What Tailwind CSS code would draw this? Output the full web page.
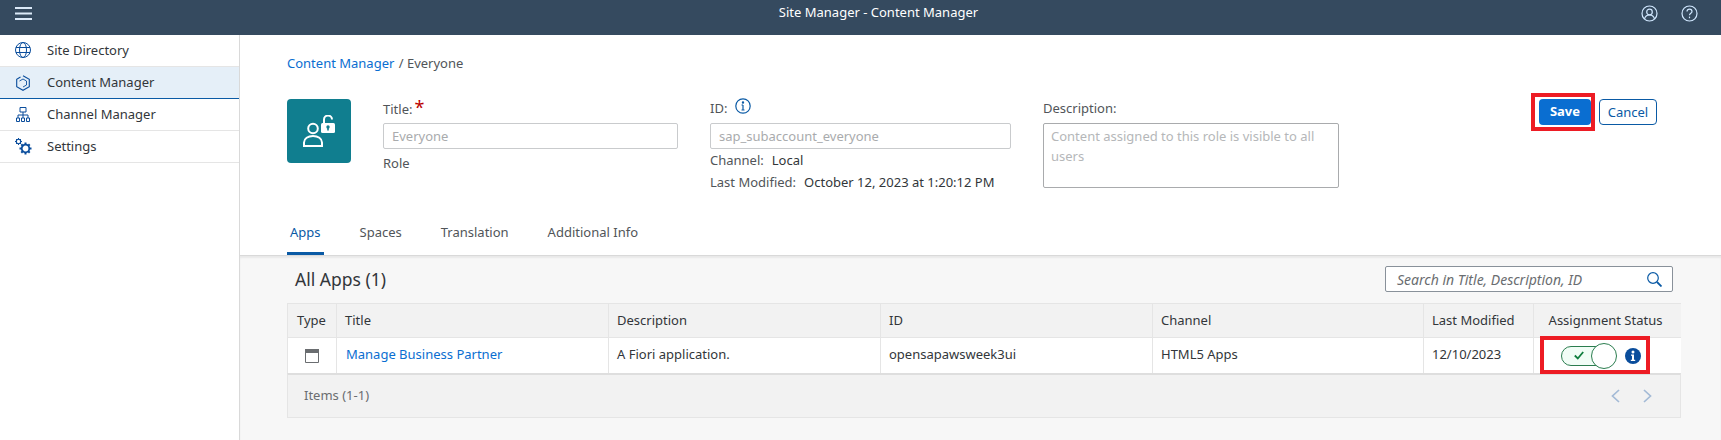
<!DOCTYPE html>
<html lang="en">

<head>
    <meta charset="UTF-8">
    <meta name="viewport" content="width=device-width, initial-scale=1.0">
    <title>Site Manager - Content Manager</title>
    <script src="https://cdn.jsdelivr.net/npm/@tailwindcss/browser@4"></script>
</head>

<body class="font-['Noto_Sans',sans-serif] text-[13px] text-[#32363a] bg-white overflow-hidden">
    <div class="w-[1721px] h-[440px] flex flex-col">

        <!-- top bar -->
        <header class="h-[35px] shrink-0 bg-[#354a5f] flex items-center relative text-white">
            <svg class="absolute left-[15px] top-[7px] w-[17px] h-[13px]" viewBox="0 0 17 13" stroke="#dbe9f8" stroke-width="2" fill="none">
                <path d="M0 1H17M0 6.5H17M0 12H17" />
            </svg>
            <div class="w-full text-center pl-[36px] text-[13px] -mt-[9px]">Site Manager - Content Manager</div>
            <svg class="absolute left-[1641px] top-[5px] w-[17px] h-[17px]" viewBox="0 0 17 17" stroke="#d1e8ff" stroke-width="1.2" fill="none">
                <circle cx="8.5" cy="8.5" r="7.5" />
                <circle cx="8.5" cy="7" r="2.8" />
                <path d="M3.5 14c.6-2.6 2.5-4 5-4s4.400 1.400 5 4" />
            </svg>
            <svg class="absolute left-[1681px] top-[5px] w-[17px] h-[17px]" viewBox="0 0 17 17" stroke="#d1e8ff" stroke-width="1.2" fill="none">
                <circle cx="8.5" cy="8.500" r="7.500" />
                <path d="M6 6.600c0-1.500 1.100-2.500 2.500-2.500s2.500 1 2.500 2.300c0 1.800-2.500 1.900-2.500 3.800" />
                <path d="M8.500 11.600v1.600" />
            </svg>
        </header>

        <div class="flex flex-1 min-h-0">
            <!-- side nav -->
            <nav class="w-[240px] shrink-0 border-r border-[#d9d9d9] bg-white">
                <div class="h-[32px] flex items-center border-b border-[#e5e5e5] pl-[47px] relative">
                    <svg class="absolute left-[15px] top-[7px] w-[16px] h-[16px]" viewBox="0 0 16 16" fill="none" stroke="#0a4d9c" stroke-width="1">
                        <circle cx="8" cy="8" r="7.500" />
                        <ellipse cx="8" cy="8" rx="3.500" ry="7.500" />
                        <path d="M1 5.500H15M1 10.500H15" />
                    </svg>
                    Site Directory
                </div>
                <div class="h-[32px] flex items-center border-b border-[#0a5aa5] bg-[#e5eff8] pl-[47px] relative">
                    <svg class="absolute left-[16px] top-[8px] w-[14px] h-[16px]" viewBox="0 0 14 16" fill="none" stroke="#0a4d9c" stroke-width="1.100">
                        <path d="M7 .700L13.300 4.300V11.700L7 15.300L.700 11.700V4.300L4.500 2.100" />
                        <path d="M3.500 6L7 4L10.500 6V10L7 12" stroke-width=".9" />
                    </svg>
                    Content Manager
                </div>
                <div class="h-[32px] flex items-center border-b border-[#e5e5e5] pl-[47px] relative">
                    <svg class="absolute left-[16px] top-[8px] w-[14px] h-[15px]" viewBox="0 0 14 15" fill="none" stroke="#0a4d9c" stroke-width="1">
                        <path d="M4 .500H10V5H4ZM7 5V8M2 11V8H12V11M7 8V11M.500 11H3.500V14.500H.500ZM5.500 11H8.500V14.500H5.500ZM10.500 11H13.500V14.500H10.500Z" />
                    </svg>
                    Channel Manager
                </div>
                <div class="h-[32px] flex items-center border-b border-[#e5e5e5] pl-[47px] relative">
                    <svg class="absolute left-[15px] top-[7px] w-[17px] h-[17px]" viewBox="0 0 17 17" fill="none" stroke="#0a4d9c">
                        <circle cx="3.500" cy="3.500" r="2.200" stroke-width="1.100" />
                        <path d="M3.500 0V1.300M3.500 5.700V7M0 3.500H1.300M5.700 3.500H7M1 1L2 2M5 5L6 6M6 1L5 2M1 6L2 5" stroke-width="1" />
                        <circle cx="10.500" cy="10.500" r="3.800" stroke-width="1.800" />
                        <path d="M10.500 4.500V6.500M10.500 14.500V16.500M4.500 10.500H6.500M14.500 10.500H16.500M6.300 6.300L7.700 7.700M13.300 13.300L14.700 14.700M14.700 6.300L13.300 7.700M7.700 13.300L6.300 14.700" stroke-width="2" />
                    </svg>
                    Settings
                </div>
            </nav>

            <main class="flex-1 min-w-0 flex flex-col">
                <!-- object header -->
                <section class="h-[220px] shrink-0 pl-[47px] pt-[20px] relative">
                    <div class="h-[16px] leading-[16px]">
                        <span class="text-[#0a6ed1]">Content Manager</span><span class="text-[#515559] ml-[1px]"> / Everyone</span>
                    </div>

                    <div class="flex mt-[28px] h-[90px]">
                        <div class="w-[64px] h-[64px] rounded-[4px] bg-[#107e8f] flex items-center justify-center shrink-0">
                            <svg class="w-[32px] h-[32px]" viewBox="0 0 32 32" fill="none" stroke="#fff" stroke-width="2">
                                <circle cx="10" cy="13.500" r="4.800" />
                                <path d="M1 31V27.500C1 23.500 5 21 10 21S19 23.500 19 27.500V31Z" />
                                <path d="M21 9V4.500A4 4 0 0 1 29 4.500" />
                                <rect x="18" y="8" width="14" height="10" rx="1.500" fill="#fff" stroke="none" />
                                <circle cx="25" cy="12" r="1.700" fill="#107e8f" stroke="none" />
                                <rect x="24.200" y="12" width="1.600" height="3.500" fill="#107e8f" stroke="none" />
                            </svg>
                        </div>

                        <div class="ml-[32px] w-[295px] shrink-0">
                            <div class="h-[24px] leading-[19px] text-[#515559]">Title:<span class="text-[#bb0000] text-[18px] leading-[16px] ml-[2px]">*</span></div>
                            <div class="h-[26px] border border-[#c9cbcd] rounded-[2px] px-[8px] leading-[25px] text-[#a9abad]">Everyone</div>
                            <div class="mt-[4px] text-[#515559] leading-[20px]">Role</div>
                        </div>

                        <div class="ml-[32px] w-[301px] shrink-0">
                            <div class="h-[24px] leading-[19px] text-[#515559] flex items-start">ID:
                                <svg class="ml-[8px] -mt-[1px] w-[16px] h-[16px]" viewBox="0 0 16 16" fill="none" stroke="#0a5aa5" stroke-width="1.200">
                                    <circle cx="8" cy="8" r="7.200" />
                                    <path d="M8 7V12M6.500 12H9.500M6.500 7H8" />
                                    <circle cx="8" cy="4.500" r=".6" fill="#0a5aa5" />
                                </svg>
                            </div>
                            <div class="h-[26px] border border-[#c9cbcd] rounded-[2px] px-[8px] leading-[25px] text-[#a9abad]">sap_subaccount_everyone</div>
                            <div class="leading-[20px] mt-[1px]"><span class="text-[#515559]">Channel:</span><span class="ml-[8px]">Local</span></div>
                            <div class="leading-[20px] mt-[2px]"><span class="text-[#515559]">Last Modified:</span><span class="ml-[8px]">October 12, 2023 at 1:20:12 PM</span></div>
                        </div>

                        <div class="ml-[32px] w-[296px] shrink-0">
                            <div class="h-[24px] leading-[19px] text-[#515559]">Description:</div>
                            <div class="h-[65px] border border-[#a9abad] rounded-[2px] px-[7px] py-[2px] leading-[20px] text-[#b5b7b9]">Content assigned to this role is visible to all users</div>
                        </div>

                        <div class="ml-[200px] flex gap-[8px] items-start h-[26px]">
                            <div class="w-[52px] h-[26px] rounded-[4px] bg-[#0a6ed1] text-white font-bold text-center leading-[25px] relative">
                                Save
                                <span class="absolute -left-[8px] -top-[6px] w-[64px] h-[38px] border-[4px] border-[#ed1c24]"></span>
                            </div>
                            <div class="w-[58px] h-[26px] rounded-[4px] border border-[#0a5aa5] text-[#0a5aa5] text-center leading-[24px]">Cancel</div>
                        </div>
                    </div>

                    <!-- tabs -->
                    <div class="flex mt-[32px] gap-[39px] pl-[3px] h-[34px] leading-[22px]">
                        <div class="text-[#0a5aa5] relative">Apps<span class="absolute -left-[3px] -right-[3px] top-[31px] h-[3px] bg-[#0a5aa5]"></span></div>
                        <div class="text-[#515559]">Spaces</div>
                        <div class="text-[#515559]">Translation</div>
                        <div class="text-[#515559]">Additional Info</div>
                    </div>
                </section>

                <!-- apps table -->
                <section class="flex-1 bg-[#f7f7f7] border-t border-[#d9d9d9] shadow-[inset_0_2px_2px_rgba(0,0,0,0.06)] pl-[47px] pr-[40px]">
                    <div class="h-[47px] flex items-center justify-between pr-[8px]">
                        <div class="pl-[8px] text-[17.500px] text-[#32363a] -mt-[1px]">All Apps (1)</div>
                        <div class="w-[288px] h-[26px] bg-white border border-[#89919a] rounded-[2px] flex items-center justify-between px-[11px] italic text-[14px] text-[#6a6d70] -mt-[1px]">
                            Search in Title, Description, ID
                            <svg class="w-[15px] h-[15px] mr-[-1px]" viewBox="0 0 15 15" fill="none" stroke="#0a5aa5" stroke-width="1.200">
                                <circle cx="6" cy="6" r="5.300" />
                                <path d="M10 10L14.500 14.500" stroke-width="1.800" />
                            </svg>
                        </div>
                    </div>

                    <div class="border border-[#e5e5e5] border-b-0 grid grid-cols-[49px_272px_272px_272px_271px_110px_147px] text-[#32363a]">
                        <div class="h-[34px] bg-[#f2f2f2] border-r border-b border-[#e5e5e5] pl-[9px] leading-[33px]">Type</div>
                        <div class="h-[34px] bg-[#f2f2f2] border-r border-b border-[#e5e5e5] pl-[8px] leading-[33px]">Title</div>
                        <div class="h-[34px] bg-[#f2f2f2] border-r border-b border-[#e5e5e5] pl-[8px] leading-[33px]">Description</div>
                        <div class="h-[34px] bg-[#f2f2f2] border-r border-b border-[#e5e5e5] pl-[8px] leading-[33px]">ID</div>
                        <div class="h-[34px] bg-[#f2f2f2] border-r border-b border-[#e5e5e5] pl-[8px] leading-[33px]">Channel</div>
                        <div class="h-[34px] bg-[#f2f2f2] border-r border-b border-[#e5e5e5] pl-[8px] leading-[33px]">Last Modified</div>
                        <div class="h-[34px] bg-[#f2f2f2] border-b border-[#e5e5e5] text-center pr-[4px] leading-[33px]">Assignment Status</div>

                        <div class="h-[35px] bg-white border-r border-[#e5e5e5] flex items-center justify-center">
                            <svg class="w-[14px] h-[14px]" viewBox="0 0 14 14">
                                <path d="M.500 .500H13.500V13.500H.500Z" fill="#fff" stroke="#6a6d70" />
                                <rect width="14" height="4" fill="#6a6d70" />
                            </svg>
                        </div>
                        <div class="h-[35px] bg-white border-r border-[#e5e5e5] pl-[9px] leading-[33px] text-[#0a6ed1]">Manage Business Partner</div>
                        <div class="h-[35px] bg-white border-r border-[#e5e5e5] pl-[8px] leading-[33px]">A Fiori application.</div>
                        <div class="h-[35px] bg-white border-r border-[#e5e5e5] pl-[8px] leading-[33px]">opensapawsweek3ui</div>
                        <div class="h-[35px] bg-white border-r border-[#e5e5e5] pl-[8px] leading-[33px]">HTML5 Apps</div>
                        <div class="h-[35px] bg-white border-r border-[#e5e5e5] pl-[8px] leading-[33px]">12/10/2023</div>
                        <div class="h-[35px] bg-white relative flex items-center pl-[27px]">
                            <div class="w-[56px] h-[22px] relative">
                                <div class="absolute left-0 top-[1px] w-[48px] h-[20px] rounded-full border border-[#2b7d4f] bg-[#f1fdf6] flex items-center pl-[12px]">
                                    <svg class="w-[10px] h-[9px]" viewBox="0 0 10 9" fill="none" stroke="#107e3e" stroke-width="1.800">
                                        <path d="M.800 4.500L3.800 7.500L9.200 1" />
                                    </svg>
                                </div>
                                <div class="absolute left-[30px] -top-[2px] w-[26px] h-[26px] rounded-full border border-[#2b7d4f] bg-white"></div>
                            </div>
                            <svg class="ml-[8px] w-[16px] h-[16px]" viewBox="0 0 16 16">
                                <circle cx="8" cy="8" r="8" fill="#0a4d9c" />
                                <path d="M6 6.500H9V11.800H10.200V13H5.800V11.800H7V7.700H6Z" fill="#fff" />
                                <circle cx="8" cy="3.900" r="1.500" fill="#fff" />
                            </svg>
                            <span class="absolute left-[6px] -top-[2px] w-[110px] h-[38px] border-[4px] border-[#ed1c24]"></span>
                        </div>
                    </div>

                    <div class="h-[45px] bg-[#f2f2f2] border border-[#e5e5e5] border-t-2 border-t-[#dedede] flex items-center justify-between pl-[16px] pr-[28px] text-[#6a6d70]">
                        Items (1-1)
                        <div class="flex gap-[23px]">
                            <svg class="w-[9px] h-[14px]" viewBox="0 0 9 14" fill="none" stroke="#a3bad6" stroke-width="1.700"><path d="M8 1L1.500 7L8 13" /></svg>
                            <svg class="w-[9px] h-[14px]" viewBox="0 0 9 14" fill="none" stroke="#a3bad6" stroke-width="1.700"><path d="M1 1L7.500 7L1 13" /></svg>
                        </div>
                    </div>
                </section>
            </main>
        </div>
    </div>
</body>

</html>
